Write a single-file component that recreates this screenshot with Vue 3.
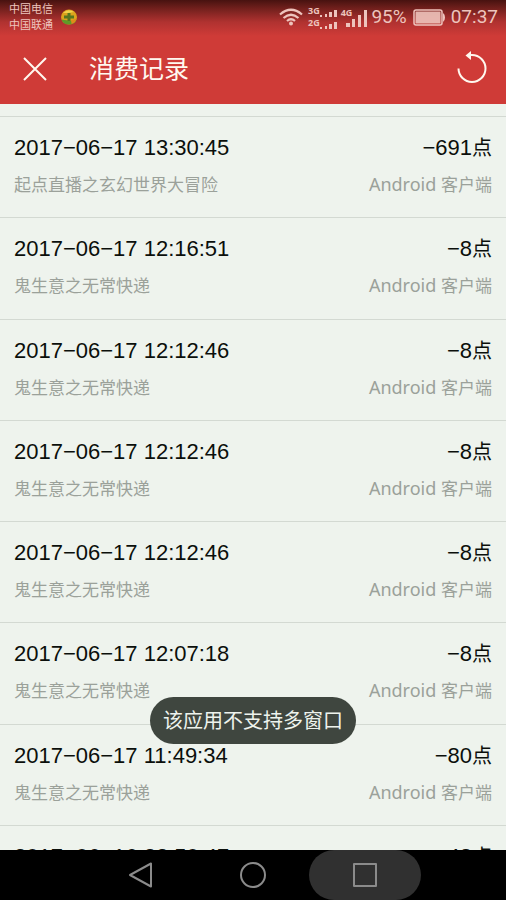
<script setup>
const records = [
  { time: '2017−06−17 13:30:45', title: '起点直播之玄幻世界大冒险', points: 691 },
  { time: '2017−06−17 12:16:51', title: '鬼生意之无常快递', points: 8 },
  { time: '2017−06−17 12:12:46', title: '鬼生意之无常快递', points: 8 },
  { time: '2017−06−17 12:12:46', title: '鬼生意之无常快递', points: 8 },
  { time: '2017−06−17 12:12:46', title: '鬼生意之无常快递', points: 8 },
  { time: '2017−06−17 12:07:18', title: '鬼生意之无常快递', points: 8 },
  { time: '2017−06−17 11:49:34', title: '鬼生意之无常快递', points: 80 },
  { time: '2017−06−16 22:50:47', title: '鬼生意之无常快递', points: 48 },
]
</script>

<template>
  <div class="screen">
    <header class="top">
      <div class="status">
        <div class="carriers"><span>中国电信</span><span>中国联通</span></div>
        <svg class="app-dot" viewBox="0 0 18 18" aria-hidden="true">
          <ellipse cx="9" cy="9" rx="8" ry="7.5" fill="#dda31c" />
          <path d="M1.500 11.500q1.500 5 7.500 5 6 0 7.500-5l-5 1.500z" fill="#5f9a28" />
          <path d="M11 12l5.500-1q-1 4-5 5z" fill="#e08a1a" />
          <path d="M3 5q5-5 11-1L8 5z" fill="#f0d24a" />
          <path d="M7.500 5h3v2.500H14v3h-3.500V13h-3v-2.500H4v-3h3.500z" fill="#56761f" />
        </svg>
        <div class="indicators">
          <svg class="wifi" viewBox="0 0 24 18" fill="none" stroke="currentColor" stroke-width="2.2" aria-hidden="true">
            <path d="M1 6.500Q12-3 23 6.500M4.500 10Q12 3.500 19.500 10M8 13Q12 9.500 16 13" />
            <circle cx="12" cy="15.500" r="2" fill="currentColor" stroke="none" />
          </svg>
          <div class="dual">
            <div class="net"><span>3G</span>
              <svg viewBox="0 0 17 8" fill="currentColor" aria-hidden="true"><path d="M0 6h2v2H0zM5 5h2v3H5zM9 3h3v5H9zM14 1h3v7h-3z" /></svg>
            </div>
            <div class="net"><span>2G</span>
              <svg viewBox="0 0 17 8" fill="currentColor" aria-hidden="true"><path d="M0 6h2v2H0zM5 5h2v3H5zM9 3h3v5H9zM14 1h3v7h-3z" /></svg>
            </div>
          </div>
          <div class="fast">
            <span>4G</span>
            <svg viewBox="0 0 21 17" fill="currentColor" aria-hidden="true"><path d="M0 13h4v4H0zM6 9h3v8H6zM12 5h3v12h-3zM18 0h3v17h-3z" /></svg>
          </div>
          <span class="percent">95%</span>
          <svg class="battery" viewBox="0 0 32 17" aria-hidden="true">
            <rect x="1" y="1" width="28" height="15" rx="2" fill="none" stroke="currentColor" stroke-width="1.500" />
            <rect x="2.500" y="2.500" width="25" height="12" fill="currentColor" opacity="0.9" />
            <path d="M30 4q2 1 2 4.500T30 13z" fill="currentColor" />
          </svg>
          <span class="clock">07:37</span>
        </div>
      </div>
      <div class="bar">
        <button type="button" aria-label="关闭">
          <svg class="close" viewBox="0 0 24 24" fill="none" stroke="currentColor" stroke-width="2" aria-hidden="true"><path d="M1 1l22 22M23 1L1 23" /></svg>
        </button>
        <h1>消费记录</h1>
        <button type="button" aria-label="刷新">
          <svg class="reload" viewBox="0 -3 30 36" aria-hidden="true">
            <path d="M1.500 14.500a13.500 13.500 0 1 0 13.500-13.500h-3" fill="none" stroke="currentColor" stroke-width="2" />
            <path d="M8.500 1.500L14-3v9z" fill="currentColor" />
          </svg>
        </button>
      </div>
    </header>

    <main class="content">
      <ul class="records">
        <li v-for="(item, index) in records" :key="index" class="record">
          <div class="line primary"><time>{{ item.time }}</time><span>−{{ item.points }}<span class="unit">点</span></span></div>
          <div class="line secondary"><span>{{ item.title }}</span><span><span class="platform">Android</span> 客户端</span></div>
        </li>
      </ul>
    </main>

    <div class="toast" role="status">该应用不支持多窗口</div>

    <nav class="keys">
      <button type="button" aria-label="返回">
        <svg viewBox="0 0 26 26" fill="none" stroke="currentColor" stroke-width="2" stroke-linejoin="round" aria-hidden="true"><path d="M23 1.500v23L2 13z" /></svg>
      </button>
      <button type="button" aria-label="主屏幕">
        <svg viewBox="0 0 26 26" fill="none" stroke="currentColor" stroke-width="2" aria-hidden="true"><circle cx="13" cy="13" r="12" /></svg>
      </button>
      <button type="button" class="pressed" aria-label="最近任务">
        <svg viewBox="0 0 26 26" fill="none" stroke="currentColor" stroke-width="2" stroke-linejoin="round" aria-hidden="true"><rect x="2" y="2" width="22" height="22" /></svg>
      </button>
    </nav>
  </div>
</template>

<style>
body {
  margin: 0;
  background: #eef3ed;
}
</style>

<style scoped>
.screen {
  position: relative;
  display: flex;
  flex-direction: column;
  height: 100vh;
  overflow: hidden;
  background: #eef3ed;
  font-family: "Liberation Sans", "Noto Sans CJK SC", sans-serif;
}
button {
  display: flex;
  align-items: center;
  justify-content: center;
  padding: 0;
  border: 0;
  background: none;
  color: inherit;
}
svg {
  display: block;
  flex: none;
}
.top {
  flex: none;
  color: #fff8ef;
  background: linear-gradient(#471210 0, #6f1f1c 8px, #b03230 22px, #cf3b37 36px);
}
.status {
  display: flex;
  align-items: center;
  height: 34px;
  padding: 0 8px 0 9px;
  color: #eec4bd;
  font-family: Roboto, "Noto Sans CJK SC", sans-serif;
}
.carriers {
  display: flex;
  flex-direction: column;
  padding-top: 2px;
  font-size: 11px;
  line-height: 16px;
}
.app-dot {
  width: 18px;
  height: 18px;
  margin-left: 7px;
}
.indicators {
  display: flex;
  align-items: center;
  margin-left: auto;
}
.wifi {
  width: 24px;
  height: 18px;
  margin-right: 5px;
}
.net {
  display: flex;
  align-items: flex-end;
  height: 12px;
}
.net svg {
  width: 17px;
  height: 8px;
}
.net span,
.fast span {
  font-family: "Open Sans", sans-serif;
  font-size: 9px;
  font-weight: 700;
  line-height: 12px;
}
.fast {
  display: flex;
  align-items: flex-end;
  margin: 0 4px;
}
.fast span {
  align-self: flex-start;
  margin-right: -6px;
}
.fast svg {
  width: 21px;
  height: 17px;
  margin-top: 3px;
}
.percent,
.clock {
  font-size: 19px;
  line-height: 24px;
}
.battery {
  width: 32px;
  height: 17px;
  margin: 0 6px;
}
.bar {
  display: flex;
  align-items: center;
  height: 70px;
  padding: 0 19px 0 23px;
}
.close {
  width: 24px;
  height: 24px;
}
.reload {
  width: 30px;
  height: 36px;
}
h1 {
  flex: 1;
  margin: 0 0 0 42px;
  font-size: 25px;
  font-weight: 400;
  line-height: 36px;
}
.content {
  flex: 1;
  min-height: 0;
  overflow: hidden;
}
.records {
  margin: 12px 0 0;
  padding: 0;
  list-style: none;
}
.record {
  padding: 15px 14px 17px;
  border-top: 1px solid #d3d9d2;
}
.record:nth-child(4n + 2) {
  padding-bottom: 18px;
}
.line {
  display: flex;
  justify-content: space-between;
}
.primary {
  margin-bottom: 8px;
  color: #0b0f0b;
  font-size: 22px;
  line-height: 32px;
}
.unit {
  font-size: 20px;
  line-height: 20px;
}
.secondary {
  color: #9ba19a;
  font-size: 17px;
  line-height: 28px;
}
.platform {
  font-family: "Noto Sans", sans-serif;
  font-size: 18px;
  line-height: 18px;
}
.toast {
  position: absolute;
  bottom: 156px;
  left: 50%;
  padding: 10px 13px 8px;
  border-radius: 24px;
  background: #3f463f;
  color: #eef3ed;
  font-size: 20px;
  line-height: 29px;
  white-space: nowrap;
  transform: translateX(-50%);
}
.keys {
  display: flex;
  flex: none;
  justify-content: center;
  height: 50px;
  background: #000;
  color: #8b8b8b;
}
.keys button {
  width: 112px;
  border-radius: 26px;
}
.keys .pressed {
  background: #303030;
}
.keys svg {
  width: 26px;
  height: 26px;
}
</style>
